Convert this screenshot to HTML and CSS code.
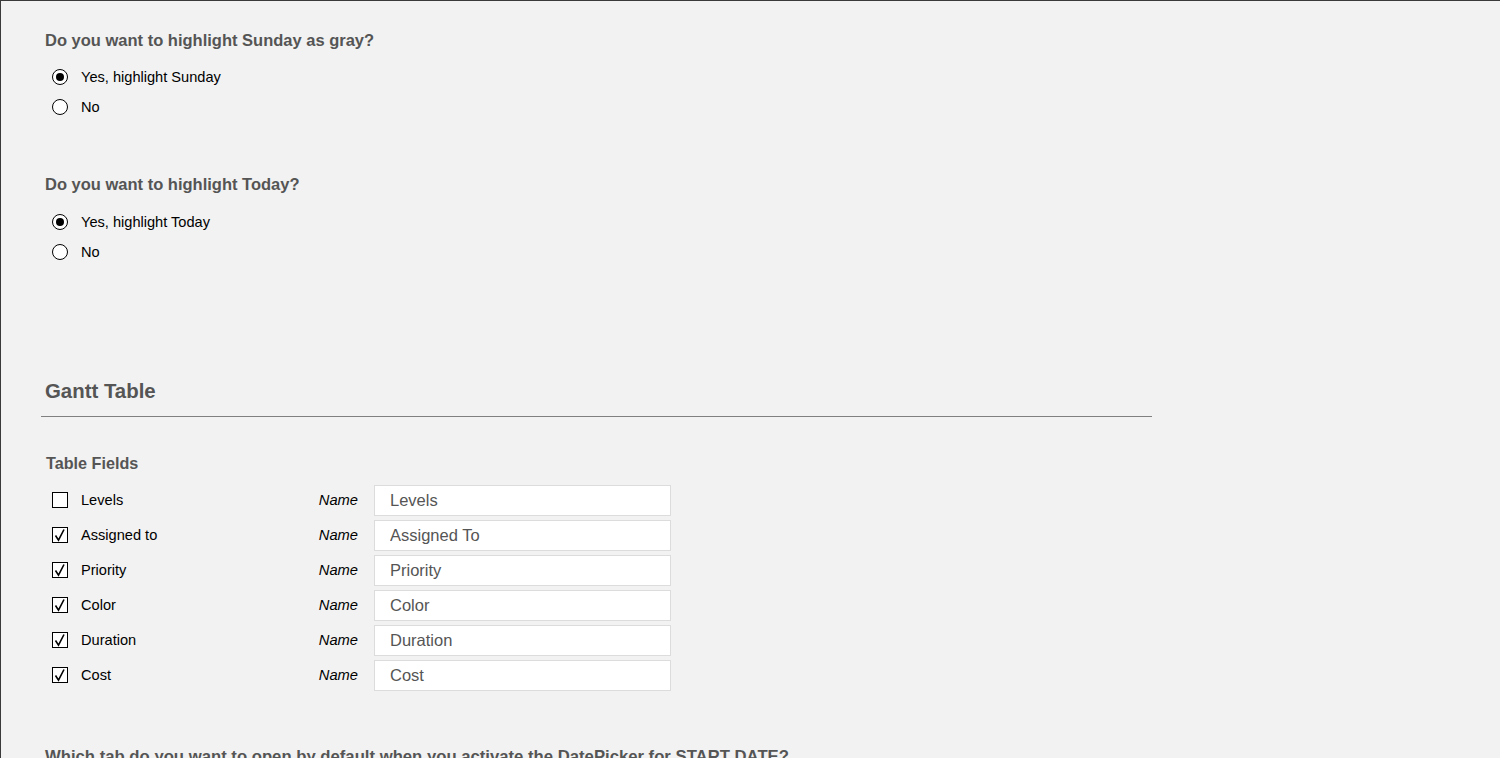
FILE: index.html
```html
<!DOCTYPE html>
<html lang="en">
<head>
<meta charset="utf-8">
<title>Settings</title>
<link rel="stylesheet" href="styles.css">
</head>
<body>
<div class="page">
  <section class="question q-first">
    <h3 class="q-title">Do you want to highlight Sunday as gray?</h3>
    <div class="radio-row"><span class="radio checked"></span><span class="opt">Yes, highlight Sunday</span></div>
    <div class="radio-row"><span class="radio"></span><span class="opt">No</span></div>
  </section>

  <section class="question q-second">
    <h3 class="q-title">Do you want to highlight Today?</h3>
    <div class="radio-row"><span class="radio checked"></span><span class="opt">Yes, highlight Today</span></div>
    <div class="radio-row"><span class="radio"></span><span class="opt">No</span></div>
  </section>

  <h2 class="section-title">Gantt Table</h2>

  <h4 class="fields-title">Table Fields</h4>
  <div class="fields">
    <div class="field-row">
      <span class="cb"></span><span class="f-label">Levels</span><span class="f-name">Name</span><input class="f-input" type="text" value="Levels">
    </div>
    <div class="field-row">
      <span class="cb"><svg viewBox="0 0 16 16" width="16" height="16"><path d="M3.5 8.5 L6.5 13.2 L12 2.5" fill="none" stroke="#000" stroke-width="1.6"/></svg></span><span class="f-label">Assigned to</span><span class="f-name">Name</span><input class="f-input" type="text" value="Assigned To">
    </div>
    <div class="field-row">
      <span class="cb"><svg viewBox="0 0 16 16" width="16" height="16"><path d="M3.5 8.5 L6.5 13.2 L12 2.5" fill="none" stroke="#000" stroke-width="1.6"/></svg></span><span class="f-label">Priority</span><span class="f-name">Name</span><input class="f-input" type="text" value="Priority">
    </div>
    <div class="field-row">
      <span class="cb"><svg viewBox="0 0 16 16" width="16" height="16"><path d="M3.5 8.5 L6.5 13.2 L12 2.5" fill="none" stroke="#000" stroke-width="1.6"/></svg></span><span class="f-label">Color</span><span class="f-name">Name</span><input class="f-input" type="text" value="Color">
    </div>
    <div class="field-row">
      <span class="cb"><svg viewBox="0 0 16 16" width="16" height="16"><path d="M3.5 8.5 L6.5 13.2 L12 2.5" fill="none" stroke="#000" stroke-width="1.6"/></svg></span><span class="f-label">Duration</span><span class="f-name">Name</span><input class="f-input" type="text" value="Duration">
    </div>
    <div class="field-row">
      <span class="cb"><svg viewBox="0 0 16 16" width="16" height="16"><path d="M3.5 8.5 L6.5 13.2 L12 2.5" fill="none" stroke="#000" stroke-width="1.6"/></svg></span><span class="f-label">Cost</span><span class="f-name">Name</span><input class="f-input" type="text" value="Cost">
    </div>
  </div>

  <h3 class="q-title q-bottom">Which tab do you want to open by default when you activate the DatePicker for START DATE?</h3>
</div>
</body>
</html>
```

FILE: styles.css
```css
html, body {
  margin: 0;
  padding: 0;
  height: 100%;
  overflow: hidden;
}
body {
  background: #f2f2f2;
  font-family: "Liberation Sans", Arial, sans-serif;
  color: #000;
}
.page {
  min-height: 100%;
  box-sizing: border-box;
  border-top: 1px solid #3a3a3a;
  border-left: 1px solid #3a3a3a;
  padding-left: 44px;
}
.q-title {
  margin: 0;
  font-size: 16.5px;
  line-height: 18px;
  font-weight: bold;
  color: #555;
  white-space: nowrap;
}
.q-first { padding-top: 30px; }
.q-second { padding-top: 53px; }
.question .q-title { margin-bottom: 13px; }
.q-second .q-title { margin-bottom: 14px; }
.radio-row {
  display: flex;
  align-items: center;
  height: 30px;
  padding-left: 7px;
}
.radio {
  width: 14px;
  height: 14px;
  border: 1px solid #000;
  border-radius: 50%;
  background: #fff;
  display: flex;
  align-items: center;
  justify-content: center;
  margin-right: 13px;
  flex: none;
}
.radio.checked::after {
  content: "";
  width: 8px;
  height: 8px;
  border-radius: 50%;
  background: #000;
}
.opt {
  font-size: 14.6px;
  line-height: 16px;
}
.section-title {
  margin: 112px 0 0 -4px;
  padding: 0 0 13px 4px;
  width: 1107px;
  font-size: 20.4px;
  line-height: 24px;
  font-weight: bold;
  color: #555;
  border-bottom: 1px solid #808080;
}
.fields-title {
  margin: 36px 0 12px 1px;
  font-size: 16.2px;
  line-height: 20px;
  font-weight: bold;
  color: #555;
}
.fields {
  display: flex;
  flex-direction: column;
  gap: 5px;
}
.field-row {
  display: flex;
  align-items: center;
  height: 30px;
  padding-left: 7px;
}
.cb {
  width: 14px;
  height: 14px;
  border: 1px solid #000;
  background: #fff;
  flex: none;
  margin-right: 13px;
  position: relative;
}
.cb svg {
  position: absolute;
  left: -1px;
  top: -1px;
}
.f-label {
  width: 200px;
  font-size: 14.6px;
  line-height: 16px;
}
.f-name {
  width: 77px;
  text-align: right;
  font-size: 14.7px;
  font-style: italic;
  margin-right: 16px;
}
.f-input {
  box-sizing: border-box;
  width: 297px;
  height: 31px;
  margin: 0;
  border: 1px solid #dcdcdc;
  background: #fff;
  padding: 0 0 0 15px;
  font-family: "Liberation Sans", Arial, sans-serif;
  font-size: 16.5px;
  color: #555;
  outline: none;
}
.q-bottom {
  margin-top: 58px;
  font-size: 16.7px;
}
```
